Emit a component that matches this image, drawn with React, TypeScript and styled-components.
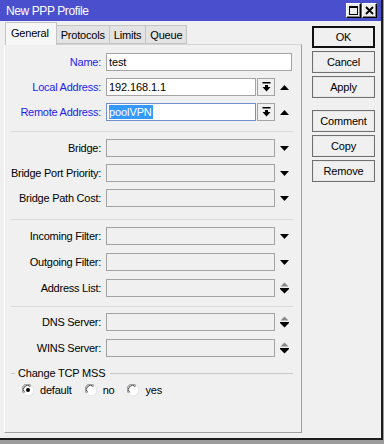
import styled, {createGlobalStyle} from 'styled-components'

const GlobalStyle = createGlobalStyle`
  html, body {
    margin: 0;
    padding: 0;
    background: #9c9c9c;
  }
  body {
    font-family: "Liberation Sans", Arial, sans-serif;
    font-size: 11px;
    color: #000;
  }
`

const Screen = styled.div`
  width: 384px;
  height: 444px;
  overflow: hidden;
  background: #9c9c9c;
`

const Window = styled.div`
  width: 381px;
  height: 438px;
  background: #f0f0f0;
  border-right: 2px solid #1e1e1e;
  border-bottom: 2px solid #1e1e1e;
  display: flex;
  flex-direction: column;
`

const TitleBar = styled.div`
  height: 21px;
  flex: none;
  background: #4a4fcd;
  color: #fff;
  display: flex;
  align-items: center;
  padding-left: 6px;
  font-size: 12px;
  letter-spacing: -0.4px;
`

const TitleText = styled.span`
  flex: 1;
`

const TitleButtons = styled.div`
  display: flex;
  gap: 1px;
  margin-right: 4px;
`

const TitleButton = styled.div`
  width: 15px;
  height: 15px;
  box-sizing: border-box;
  background: #ececec;
  border: 1px solid #000;
  border-top-color: #fff;
  border-left-color: #fff;
  box-shadow: inset -1px -1px 0 #808080;
  display: flex;
  align-items: center;
  justify-content: center;
`

const Body = styled.div`
  flex: 1;
  display: flex;
  padding: 1px 0 0 4px;
`

const LeftColumn = styled.div`
  width: 298px;
  display: flex;
  flex-direction: column;
`

const TabStrip = styled.div`
  display: flex;
  align-items: flex-end;
  height: 22px;
  padding-left: 1px;
  position: relative;
  z-index: 1;
`

const Tab = styled.div<{$active?: boolean}>`
  box-sizing: border-box;
  height: ${(p) => (p.$active ? '23px' : '19px')};
  margin-bottom: ${(p) => (p.$active ? '-1px' : '0')};
  padding: ${(p) => (p.$active ? '3px 7px 0 5px' : '2px 4px 0 4px')};
  background: ${(p) => (p.$active ? '#f7f7f7' : '#e3e3e3')};
  border: 1px solid #c4c4c4;
  border-bottom: ${(p) => (p.$active ? 'none' : '1px solid #c4c4c4')};
  margin-left: ${(p) => (p.$active ? '0' : '-1px')};
  letter-spacing: -0.2px;
  font-size: 11px;
  line-height: 14px;
`

const Panel = styled.div`
  flex: none;
  height: 389px;
  box-sizing: border-box;
  border: 1px solid #a0a0a0;
  border-top-color: #d4d4d4;
  border-left-color: #fcfcfc;
  display: flex;
  flex-direction: column;
`

const Section = styled.div<{$gap: number; $top: number}>`
  display: flex;
  flex-direction: column;
  gap: ${(p) => p.$gap}px;
  margin-top: ${(p) => p.$top}px;
`

const Separator = styled.div<{$top: number}>`
  height: 1px;
  background: #dadada;
  margin: ${(p) => p.$top}px 8px 0 6px;
`

const Row = styled.div`
  display: flex;
  align-items: center;
  height: 18px;
`

const Label = styled.div<{$blue?: boolean}>`
  width: 96px;
  text-align: right;
  color: ${(p) => (p.$blue ? '#1c1cf0' : '#000')};
  letter-spacing: -0.25px;
  white-space: nowrap;
  margin-right: 5px;
`

const Input = styled.div<{$width: number; $enabled?: boolean; $focused?: boolean}>`
  width: ${(p) => p.$width}px;
  height: 18px;
  box-sizing: border-box;
  border: 1px solid ${(p) => (p.$focused ? '#6f8fd0' : '#a3a3a3')};
  background: ${(p) => (p.$enabled ? '#fff' : '#f0f0f0')};
  display: flex;
  align-items: center;
  padding-left: 2px;
  font-size: 11px;
  letter-spacing: -0.1px;
`

const Selected = styled.span`
  background: #3399ff;
  color: #fff;
  line-height: 14px;
  padding-right: 1px;
`

const DropButton = styled.div`
  width: 18px;
  height: 18px;
  box-sizing: border-box;
  margin-left: 1px;
  border: 1px solid #a3a3a3;
  background: #f0f0f0;
  display: flex;
  align-items: center;
  justify-content: center;
`

const ArrowSlot = styled.div`
  width: 9px;
  margin-left: 5px;
  display: flex;
  align-items: center;
  justify-content: center;
`

const GroupHeader = styled.div`
  display: flex;
  align-items: center;
  margin: 9px 8px 0 6px;
  height: 14px;
  letter-spacing: -0.2px;
`

const GroupLine = styled.div<{$width?: number}>`
  height: 1px;
  background: #c8c8c8;
  width: ${(p) => (p.$width ? `${p.$width}px` : 'auto')};
  flex: ${(p) => (p.$width ? 'none' : '1')};
`

const GroupTitle = styled.span`
  margin: 0 5px 0 3px;
`

const RadioRow = styled.div`
  display: flex;
  align-items: center;
  padding-left: 17px;
  margin-top: 3px;
  height: 14px;
`

const RadioOption = styled.label`
  display: flex;
  align-items: center;
  margin-right: 13px;
  letter-spacing: -0.2px;
  gap: 6px;
`

const RightColumn = styled.div`
  margin-left: 10px;
  padding-top: 4px;
  width: 63px;
  display: flex;
  flex-direction: column;
  gap: 3px;
`

const Button = styled.div<{$default?: boolean; $spaced?: boolean}>`
  height: 22px;
  box-sizing: border-box;
  border: ${(p) => (p.$default ? '2px solid #111' : '1px solid #707070')};
  box-shadow: ${(p) => (p.$default ? 'none' : 'inset 0 0 0 1px #e8e8e8')};
  background: #f0f0f0;
  display: flex;
  align-items: center;
  justify-content: center;
  margin-top: ${(p) => (p.$spaced ? '9px' : '0')};
  font-size: 11px;
  letter-spacing: -0.2px;
`

const DownArrow = () => (
  <svg width="9" height="5" viewBox="0 0 9 5">
    <polygon points="0,0 9,0 4.5,5" fill="#000" />
  </svg>
)

const UpArrow = () => (
  <svg width="9" height="5" viewBox="0 0 9 5">
    <polygon points="0,5 9,5 4.5,0" fill="#000" />
  </svg>
)

const SpinArrow = () => (
  <svg width="9" height="12" viewBox="0 0 9 12">
    <polygon points="0.5,4.5 8.5,4.5 4.5,0.5" fill="#8a8a8a" />
    <rect x="0" y="6" width="9" height="1" fill="#000" />
    <polygon points="0,7 9,7 4.5,11.5" fill="#000" />
  </svg>
)

const DropIcon = () => (
  <svg width="9" height="10" viewBox="0 0 9 10">
    <rect x="0.5" y="0" width="8" height="1.5" fill="#000" />
    <rect x="3" y="3" width="3" height="2" fill="#000" />
    <polygon points="0.5,5 8.5,5 4.5,9.5" fill="#000" />
  </svg>
)

const Radio = ({checked}: {checked?: boolean}) => (
  <svg width="12" height="12" viewBox="0 0 12 12">
    <circle cx="6" cy="6" r="5.5" fill="#fff" />
    <path d="M1.6 9.2 A5.2 5.2 0 0 1 9.2 1.6" stroke="#808080" strokeWidth="1" fill="none" />
    <path d="M2.6 8.4 A4.1 4.1 0 0 1 8.4 2.6" stroke="#404040" strokeWidth="1" fill="none" />
    <path d="M10.4 2.8 A5.2 5.2 0 0 1 2.8 10.4" stroke="#e0e0e0" strokeWidth="1" fill="none" />
    {checked && <circle cx="6" cy="6" r="2" fill="#000" />}
  </svg>
)

const MaximizeIcon = () => (
  <svg width="9" height="9" viewBox="0 0 9 9">
    <rect x="0.5" y="0.5" width="8" height="8" fill="none" stroke="#000" />
    <rect x="0" y="0" width="9" height="2" fill="#000" />
  </svg>
)

const CloseIcon = () => (
  <svg width="9" height="9" viewBox="0 0 9 9">
    <path d="M1 1 L8 8 M8 1 L1 8" stroke="#000" strokeWidth="1.8" />
  </svg>
)

type Extra = 'down' | 'spin' | 'drop' | 'none'

interface FieldRowProps {
  label: string
  blue?: boolean
  width: number
  enabled?: boolean
  focused?: boolean
  extra: Extra
  children?: React.ReactNode
}

function FieldRow({label, blue, width, enabled, focused, extra, children}: FieldRowProps) {
  return (
    <Row>
      <Label $blue={blue}>{label}</Label>
      <Input $width={width} $enabled={enabled} $focused={focused}>
        {children}
      </Input>
      {extra === 'drop' && (
        <>
          <DropButton>
            <DropIcon />
          </DropButton>
          <ArrowSlot>
            <UpArrow />
          </ArrowSlot>
        </>
      )}
      {extra === 'down' && (
        <ArrowSlot>
          <DownArrow />
        </ArrowSlot>
      )}
      {extra === 'spin' && (
        <ArrowSlot>
          <SpinArrow />
        </ArrowSlot>
      )}
    </Row>
  )
}

export default function App() {
  return (
    <Screen>
      <GlobalStyle />
      <Window>
        <TitleBar>
          <TitleText>New PPP Profile</TitleText>
          <TitleButtons>
            <TitleButton>
              <MaximizeIcon />
            </TitleButton>
            <TitleButton>
              <CloseIcon />
            </TitleButton>
          </TitleButtons>
        </TitleBar>
        <Body>
          <LeftColumn>
            <TabStrip>
              <Tab $active>General</Tab>
              <Tab>Protocols</Tab>
              <Tab>Limits</Tab>
              <Tab>Queue</Tab>
            </TabStrip>
            <Panel>
              <Section $gap={7} $top={8}>
                <FieldRow label="Name:" blue width={186} enabled extra="none">
                  test
                </FieldRow>
                <FieldRow label="Local Address:" blue width={150} enabled extra="drop">
                  192.168.1.1
                </FieldRow>
                <FieldRow label="Remote Address:" blue width={150} enabled focused extra="drop">
                  <Selected>poolVPN</Selected>
                </FieldRow>
              </Section>
              <Separator $top={10} />
              <Section $gap={7} $top={7}>
                <FieldRow label="Bridge:" width={169} extra="down" />
                <FieldRow label="Bridge Port Priority:" width={169} extra="down" />
                <FieldRow label="Bridge Path Cost:" width={169} extra="down" />
              </Section>
              <Separator $top={12} />
              <Section $gap={8} $top={7}>
                <FieldRow label="Incoming Filter:" width={169} extra="down" />
                <FieldRow label="Outgoing Filter:" width={169} extra="down" />
                <FieldRow label="Address List:" width={169} extra="spin" />
              </Section>
              <Separator $top={9} />
              <Section $gap={8} $top={6}>
                <FieldRow label="DNS Server:" width={169} extra="spin" />
                <FieldRow label="WINS Server:" width={169} extra="spin" />
              </Section>
              <GroupHeader>
                <GroupLine $width={4} />
                <GroupTitle>Change TCP MSS</GroupTitle>
                <GroupLine />
              </GroupHeader>
              <RadioRow>
                <RadioOption>
                  <Radio checked />
                  default
                </RadioOption>
                <RadioOption>
                  <Radio />
                  no
                </RadioOption>
                <RadioOption>
                  <Radio />
                  yes
                </RadioOption>
              </RadioRow>
            </Panel>
          </LeftColumn>
          <RightColumn>
            <Button $default>OK</Button>
            <Button>Cancel</Button>
            <Button>Apply</Button>
            <Button $spaced>Comment</Button>
            <Button>Copy</Button>
            <Button>Remove</Button>
          </RightColumn>
        </Body>
      </Window>
    </Screen>
  )
}
